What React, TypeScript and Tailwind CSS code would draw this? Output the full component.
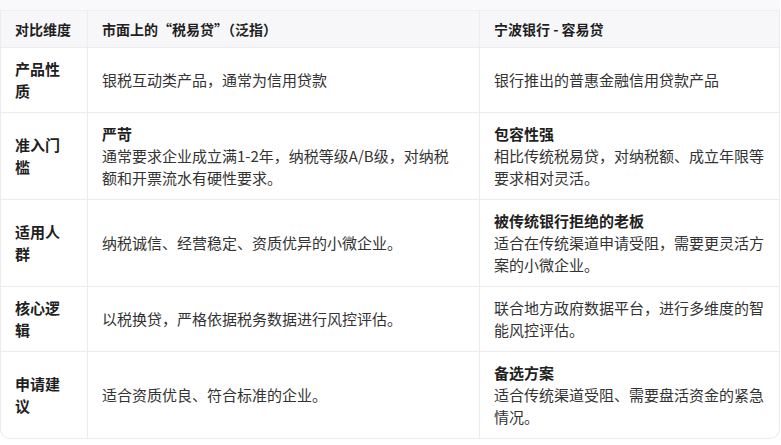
import React from "react";

type Cell = { bold?: string; text: string };
const rows: { label: string; a: Cell; b: Cell }[] = [
  { label: "产品性质", a: { text: "银税互动类产品，通常为信用贷款" }, b: { text: "银行推出的普惠金融信用贷款产品" } },
  {
    label: "准入门槛",
    a: { bold: "严苛", text: "通常要求企业成立满1-2年，纳税等级A/B级，对纳税额和开票流水有硬性要求。" },
    b: { bold: "包容性强", text: "相比传统税易贷，对纳税额、成立年限等要求相对灵活。" },
  },
  {
    label: "适用人群",
    a: { text: "纳税诚信、经营稳定、资质优异的小微企业。" },
    b: { bold: "被传统银行拒绝的老板", text: "适合在传统渠道申请受阻，需要更灵活方案的小微企业。" },
  },
  {
    label: "核心逻辑",
    a: { text: "以税换贷，严格依据税务数据进行风控评估。" },
    b: { text: "联合地方政府数据平台，进行多维度的智能风控评估。" },
  },
  {
    label: "申请建议",
    a: { text: "适合资质优良、符合标准的企业。" },
    b: { bold: "备选方案", text: "适合传统渠道受阻、需要盘活资金的紧急情况。" },
  },
];

function Body({ c }: { c: Cell }) {
  return (
    <div>
      {c.bold && <div className="font-bold text-[#1f1f1f]">{c.bold}</div>}
      <div>{c.text}</div>
    </div>
  );
}

export default function App() {
  return (
    <div
      className="w-[781px] h-[445px] bg-white text-[#333333]"
      style={{ fontFamily: '"Noto Sans CJK SC", "Noto Sans", sans-serif' }}
    >
      <div className="h-[11px] w-[780px] bg-[#f9f9fb] border-b border-[#efeff1]" />
      <div className="w-[780px] border-x border-b border-[#ececee] rounded-b-[10px] overflow-hidden">
        <div className="grid grid-cols-[87px_392px_1fr] bg-[#f7f7f9] border-b border-[#ececee] text-[14px] font-bold text-[#1f1f1f] leading-[22px]">
          <div className="pl-[14px] py-[7px] border-r border-[#eeeef0] whitespace-nowrap">对比维度</div>
          <div className="pl-[14px] py-[7px] border-r border-[#eeeef0]">市面上的“税易贷”（泛指）</div>
          <div className="pl-[14px] py-[7px]">宁波银行 - 容易贷</div>
        </div>
        {rows.map((r, i) => (
          <div
            key={r.label}
            className={
              i < rows.length - 1
                ? "grid grid-cols-[87px_392px_1fr] text-[15px] leading-[22px] border-b border-[#ececee]"
                : "grid grid-cols-[87px_392px_1fr] text-[15px] leading-[22px]"
            }
          >
            <div className="pl-[14px] pr-[14px] py-[10px] border-r border-[#ececee] flex items-center font-bold text-[#1f1f1f]">
              {r.label}
            </div>
            <div className="pl-[14px] pr-[20px] py-[10px] border-r border-[#ececee] flex items-center">
              <Body c={r.a} />
            </div>
            <div className="pl-[14px] pr-[12px] py-[10px] flex items-center">
              <Body c={r.b} />
            </div>
          </div>
        ))}
      </div>
    </div>
  );
}
